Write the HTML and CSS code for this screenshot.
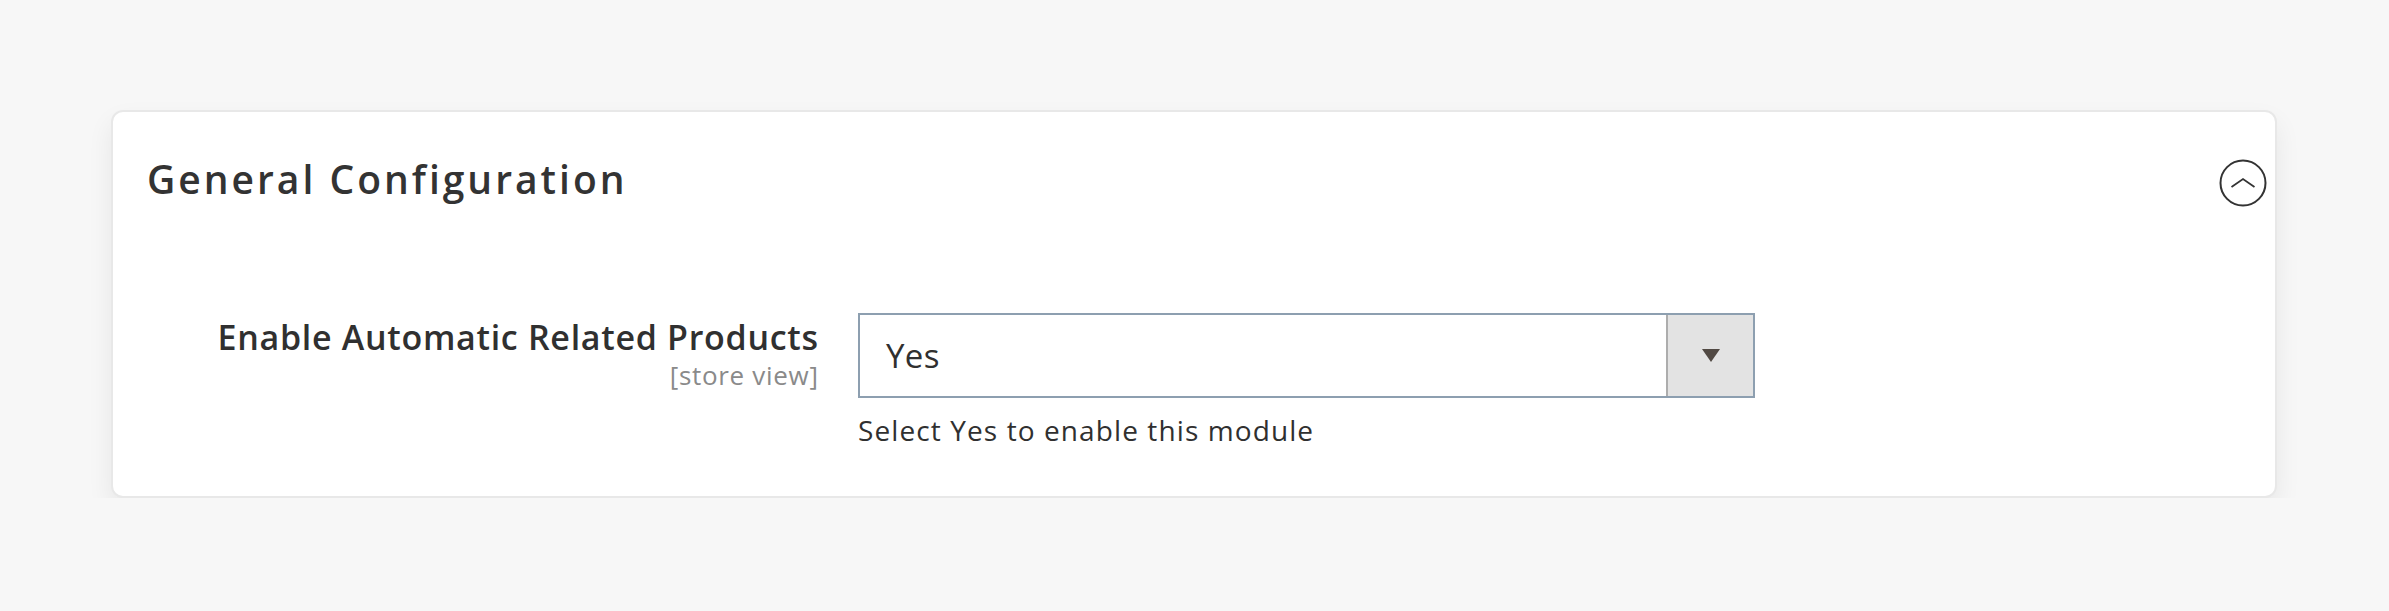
FILE: index.html
```html
<!DOCTYPE html>
<html lang="en">
<head>
<meta charset="utf-8">
<title>General Configuration</title>
<link rel="stylesheet" href="styles.css">
</head>
<body>
<main class="page">
  <section class="card">
    <header class="card-head">
      <h2 class="card-title">General Configuration</h2>
      <button class="collapse-btn" type="button" aria-label="Collapse">
        <svg viewBox="0 0 48 48" width="48" height="48" aria-hidden="true">
          <circle cx="24" cy="24" r="22.5" fill="none" stroke="#333" stroke-width="2"/>
          <polyline points="12.5,28 24,20 35.5,28" fill="none" stroke="#333" stroke-width="1.8"/>
        </svg>
      </button>
    </header>
    <div class="field-row">
      <div class="field-label">
        <span class="label-text">Enable Automatic Related Products</span>
        <span class="scope">[store view]</span>
      </div>
      <div class="field-control">
        <div class="select">
          <span class="select-value">Yes</span>
          <span class="select-btn"><span class="arrow"></span></span>
        </div>
        <p class="note">Select Yes to enable this module</p>
      </div>
    </div>
  </section>
</main>
</body>
</html>
```
FILE: styles.css
```css
html, body {
  margin: 0;
  padding: 0;
}
body {
  background: #f7f7f7;
  font-family: "Open Sans", "Liberation Sans", sans-serif;
  color: #303030;
}
.page {
  padding: 110px 0 0 111px;
}
.card {
  box-sizing: border-box;
  width: 2166px;
  height: 388px;
  background: #fff;
  border: 2px solid #e8e8e8;
  border-radius: 12px;
  box-shadow: 0 12px 26px rgba(0, 0, 0, 0.07);
  padding: 44px 8px 0 34px;
}
.card-head {
  display: flex;
  align-items: center;
  justify-content: space-between;
  height: 46px;
}
.card-title {
  margin: 0;
  font-size: 39px;
  line-height: 46px;
  font-weight: 600;
  letter-spacing: 3px;
  color: #333;
}
.collapse-btn {
  border: 0;
  padding: 0;
  margin: 8px 0 0 0;
  background: none;
  width: 48px;
  height: 48px;
  display: flex;
}
.field-row {
  display: grid;
  grid-template-columns: 671px 897px;
  column-gap: 40px;
  margin-top: 111px;
}
.field-label {
  display: flex;
  flex-direction: column;
  align-items: flex-end;
  padding-top: 4px;
}
.label-text {
  font-size: 34px;
  line-height: 40px;
  font-weight: 600;
  letter-spacing: 0.7px;
  margin-right: -0.7px;
  color: #303030;
}
.scope {
  font-size: 26px;
  line-height: 32px;
  letter-spacing: 0.7px;
  margin-right: -0.7px;
  color: #8a8a8a;
  margin-top: 2px;
}
.field-control {
  display: flex;
  flex-direction: column;
}
.select {
  box-sizing: border-box;
  height: 85px;
  border: 2px solid #8d9fb0;
  display: flex;
  align-items: stretch;
  background: #fff;
}
.select-value {
  flex: 1;
  display: flex;
  align-items: center;
  padding-left: 26px;
  font-size: 33px;
  letter-spacing: 0.4px;
  color: #303030;
}
.select-btn {
  width: 85px;
  background: #e3e3e3;
  border-left: 2px solid #adadad;
  display: flex;
  align-items: center;
  justify-content: center;
}
.arrow {
  width: 0;
  height: 0;
  border-top: 13px solid #514943;
  border-left: 9px solid transparent;
  border-right: 9px solid transparent;
}
.note {
  margin: 14px 0 0 0;
  font-size: 28px;
  line-height: 36px;
  letter-spacing: 1.1px;
  color: #303030;
}
```
